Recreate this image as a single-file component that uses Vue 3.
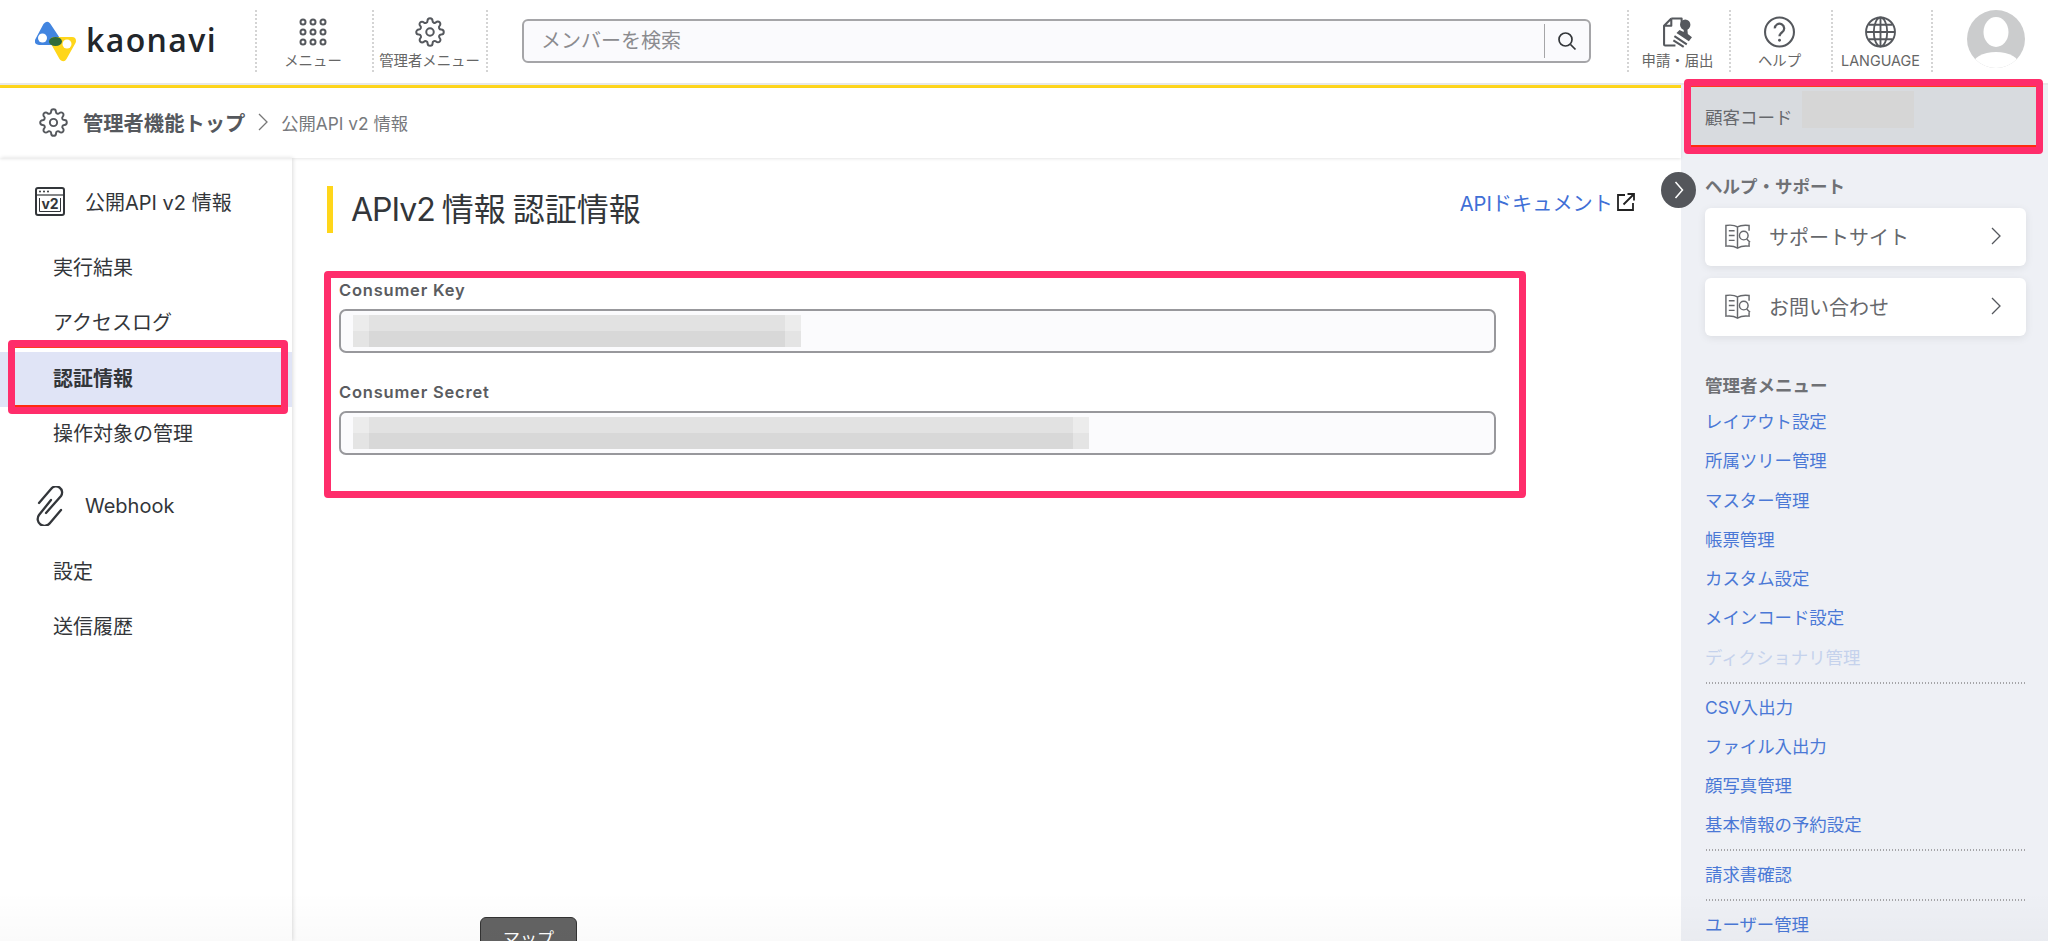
<template>
  <div class="page">
    <header class="topbar">
      <div class="brand">
        <svg class="logo" viewBox="0 0 42 42" width="42" height="42">
          <path d="M12 6 L4 21 L22 21 Z" fill="#4285e0" stroke="#4285e0" stroke-width="8" stroke-linejoin="round" />
          <path d="M19 21 L37 21 L28 37 Z" fill="#ffd61a" stroke="#ffd61a" stroke-width="8" stroke-linejoin="round" />
          <ellipse cx="20.5" cy="21.5" rx="6.5" ry="4.5" fill="#2f6b3a" />
          <circle cx="7.5" cy="18" r="4.5" fill="#fff" />
          <circle cx="32" cy="24" r="4.5" fill="#fff" />
        </svg>
        <span class="wordmark">kaonavi</span>
      </div>

      <div class="cell cell-first cell-left">
        <svg class="icon" viewBox="0 0 28 28" width="28" height="28" fill="none" stroke="#55585d" stroke-width="2">
          <g v-for="y in [4, 14, 24]" :key="y">
            <circle v-for="x in [4, 14, 24]" :key="x" :cx="x" :cy="y" r="2.5" />
          </g>
        </svg>
        <span class="cell-label">メニュー</span>
      </div>
      <div class="cell cell-left cell-right">
        <svg class="icon" viewBox="0 0 24 24" width="30" height="30" fill="none" stroke="#55585d" stroke-width="1.6">
          <circle cx="12" cy="12" r="3" />
          <path :d="gearPath" />
        </svg>
        <span class="cell-label">管理者メニュー</span>
      </div>

      <div class="search">
        <input class="search-input" type="text" placeholder="メンバーを検索" />
        <span class="search-btn">
          <svg viewBox="0 0 20 20" width="20" height="20" fill="none" stroke="#33363a" stroke-width="1.7">
            <circle cx="8.5" cy="8.5" r="6.5" />
            <path d="M13.5 13.5 L18.5 18.5" />
          </svg>
        </span>
      </div>

      <div class="cell wide cell-left">
        <svg class="icon" viewBox="0 0 30 30" width="31" height="30">
          <path d="M9 2 H19 V9 M9 2 L2 9 V27 a1 1 0 0 0 1 1 H13 M2 9 H9 V2" fill="none" stroke="#55585d" stroke-width="2" stroke-linejoin="round" />
          <circle cx="22.5" cy="8" r="5" fill="#55585d" />
          <path d="M21 12 L24.5 12 L25 17 L29 20 L26 24 L14 16 L17 13 L21 15 Z" fill="#55585d" />
          <path d="M12 19 L24 27 M11 23 L21 29.5" stroke="#55585d" stroke-width="2" fill="none" />
        </svg>
        <span class="cell-label">申請・届出</span>
      </div>
      <div class="cell wide cell-left">
        <svg class="icon" viewBox="0 0 30 30" width="31" height="31" fill="none" stroke="#55585d" stroke-width="2">
          <circle cx="15" cy="15" r="14" />
          <path d="M10.5 11.5 a4.5 4.5 0 1 1 7 3.7 c-1.7 1.1 -2.5 2 -2.5 3.8" stroke-width="2.2" />
          <circle cx="15" cy="23" r="1.4" fill="#55585d" stroke="none" />
        </svg>
        <span class="cell-label">ヘルプ</span>
      </div>
      <div class="cell wide cell-left cell-right">
        <svg class="icon" viewBox="0 0 30 30" width="31" height="31" fill="none" stroke="#55585d" stroke-width="1.8">
          <circle cx="15" cy="15" r="14" />
          <ellipse cx="15" cy="15" rx="6.5" ry="14" />
          <path d="M15 1 V29 M1 15 H29 M3.5 8 H26.5 M3.5 22 H26.5" />
        </svg>
        <span class="cell-label">LANGUAGE</span>
      </div>

      <div class="avatar">
        <svg viewBox="0 0 58 58" width="58" height="58">
          <defs>
            <clipPath id="avatar-clip"><circle cx="29" cy="29" r="29" /></clipPath>
          </defs>
          <circle cx="29" cy="29" r="29" fill="#cbcccd" />
          <g clip-path="url(#avatar-clip)" fill="#fff">
            <ellipse cx="29" cy="22" rx="12.5" ry="15" />
            <ellipse cx="29" cy="56" rx="24" ry="14" />
          </g>
        </svg>
      </div>
    </header>

    <div class="body">
      <div class="main">
        <div class="breadcrumb">
          <svg viewBox="0 0 24 24" width="29" height="29" fill="none" stroke="#55585d" stroke-width="1.6">
            <circle cx="12" cy="12" r="3" />
            <path :d="gearPath" />
          </svg>
          <span class="crumb-top">管理者機能トップ</span>
          <svg class="crumb-sep" viewBox="0 0 10 18" width="10" height="18" fill="none" stroke="#777" stroke-width="1.3">
            <path d="M1 1 L9 9 L1 17" />
          </svg>
          <span class="crumb-current">公開API v2 情報</span>
        </div>

        <div class="columns">
          <aside class="sidebar">
            <div class="side-title">
              <svg class="side-icon" viewBox="0 0 30 29" width="30" height="29">
                <rect x="1" y="1" width="28" height="27" rx="2" fill="none" stroke="#33363a" stroke-width="2" />
                <path d="M1 8 H29" stroke="#33363a" stroke-width="1.2" />
                <circle cx="5" cy="4.5" r="1" fill="#33363a" />
                <circle cx="9" cy="4.5" r="1" fill="#33363a" />
                <circle cx="13" cy="4.5" r="1" fill="#33363a" />
                <path d="M4.5 11 V24.500 H25.500 V11" fill="none" stroke="#33363a" stroke-width="1" />
                <text x="15" y="22" class="v2-text">v2</text>
              </svg>
              <span>公開API v2 情報</span>
            </div>
            <a
              v-for="item in apiItems"
              :key="item.label"
              class="side-item"
              :class="{ active: item.active }"
            >{{ item.label }}</a>

            <div class="side-title webhook">
              <svg class="side-icon" viewBox="10 5 30 40" width="30" height="40" fill="none" stroke="#33363a" stroke-width="2.300" stroke-linecap="round">
                <path d="M14 22 L26 8 a6 6 0 0 1 10 7 L21 32" />
                <path d="M36 29 L25 42 a6.500 6.500 0 0 1 -11 -8 L26 19" />
              </svg>
              <span>Webhook</span>
            </div>
            <a v-for="item in hookItems" :key="item" class="side-item">{{ item }}</a>
          </aside>

          <main class="content">
            <div class="content-head">
              <h1 class="heading"><span class="heading-api">APIv2</span> 情報 認証情報</h1>
              <a class="doc-link">
                APIドキュメント
                <svg viewBox="0 0 18 18" width="18" height="18" fill="none" stroke="#222" stroke-width="1.8">
                  <path d="M8 2 H1 V17 H16 V10" />
                  <path d="M6.500 11.500 L16.500 1.500 M10.500 1 H17 V7.500" />
                </svg>
              </a>
            </div>

            <section class="cred-box">
              <div v-for="field in fields" :key="field.label" class="field">
                <label class="field-label">{{ field.label }}</label>
                <div class="field-input">
                  <div class="mosaic" :style="{ width: field.width + 'px' }">
                    <i class="m1"></i><i class="m2"></i><i class="m1"></i>
                    <i class="m3"></i><i class="m4"></i><i class="m3"></i>
                  </div>
                </div>
              </div>
            </section>
          </main>
        </div>

        <div class="map-tab">マップ</div>
      </div>

      <aside class="panel">
        <button class="toggle" type="button">
          <svg viewBox="0 0 10 18" width="10" height="18" fill="none" stroke="#fff" stroke-width="1.5">
            <path d="M1.500 1 L8.500 9 L1.500 17" />
          </svg>
        </button>

        <div class="customer">
          <span>顧客コード</span>
          <i class="customer-mask"></i>
        </div>

        <h2 class="panel-title help-title">ヘルプ・サポート</h2>
        <a v-for="card in cards" :key="card" class="card">
          <svg viewBox="0 0 28 28" width="27" height="27" fill="none" stroke="#66686c" stroke-width="1.500">
            <path d="M14 4 C10 1.500 6 2 2 2.500 V24 C6 23.500 10 23.500 14 26 C18 23.500 22 23.500 26 24 V20" />
            <path d="M14 4 C16.500 2.500 20 2 26 2.500 V8 M14 4 V26" />
            <path d="M5 8 H11 M5 13 H11 M5 18 H11" />
            <circle cx="20.500" cy="13" r="4.500" />
            <path d="M23.500 16.500 L27 20" />
          </svg>
          <span class="card-text">{{ card }}</span>
          <svg class="card-arrow" viewBox="0 0 10 18" width="10" height="18" fill="none" stroke="#55585d" stroke-width="1.300">
            <path d="M1 1 L9 9 L1 17" />
          </svg>
        </a>

        <h2 class="panel-title admin-title">管理者メニュー</h2>
        <div v-for="(group, i) in linkGroups" :key="i" class="link-group" :class="{ divided: i > 0 }">
          <a
            v-for="link in group"
            :key="link"
            class="panel-link"
            :class="{ disabled: link === 'ディクショナリ管理' }"
          >{{ link }}</a>
        </div>
      </aside>
    </div>
  </div>
</template>

<script setup>
const gearPath = 'M19.4 15a1.65 1.65 0 0 0 .33 1.82l.06.06a2 2 0 0 1 0 2.83 2 2 0 0 1-2.83 0l-.06-.06a1.65 1.65 0 0 0-1.82-.33 1.65 1.65 0 0 0-1 1.51V21a2 2 0 0 1-2 2 2 2 0 0 1-2-2v-.09A1.65 1.65 0 0 0 9 19.4a1.65 1.65 0 0 0-1.82.33l-.06.06a2 2 0 0 1-2.83 0 2 2 0 0 1 0-2.83l.06-.06a1.65 1.65 0 0 0 .33-1.82 1.65 1.65 0 0 0-1.51-1H3a2 2 0 0 1-2-2 2 2 0 0 1 2-2h.09A1.65 1.65 0 0 0 4.6 9a1.65 1.65 0 0 0-.33-1.82l-.06-.06a2 2 0 0 1 0-2.83 2 2 0 0 1 2.83 0l.06.06a1.65 1.65 0 0 0 1.82.33H9a1.65 1.65 0 0 0 1-1.51V3a2 2 0 0 1 2-2 2 2 0 0 1 2 2v.09a1.65 1.65 0 0 0 1 1.51 1.65 1.65 0 0 0 1.82-.33l.06-.06a2 2 0 0 1 2.83 0 2 2 0 0 1 0 2.83l-.06.06a1.65 1.65 0 0 0-.33 1.82V9a1.65 1.65 0 0 0 1.51 1H21a2 2 0 0 1 2 2 2 2 0 0 1-2 2h-.09a1.65 1.65 0 0 0-1.51 1z'

const apiItems = [
  { label: '実行結果' },
  { label: 'アクセスログ' },
  { label: '認証情報', active: true },
  { label: '操作対象の管理' }
]
const hookItems = ['設定', '送信履歴']

const fields = [
  { label: 'Consumer Key', width: 448 },
  { label: 'Consumer Secret', width: 736 }
]

const cards = ['サポートサイト', 'お問い合わせ']

const linkGroups = [
  ['レイアウト設定', '所属ツリー管理', 'マスター管理', '帳票管理', 'カスタム設定', 'メインコード設定', 'ディクショナリ管理'],
  ['CSV入出力', 'ファイル入出力', '顔写真管理', '基本情報の予約設定'],
  ['請求書確認'],
  ['ユーザー管理']
]
</script>

<style>
html,
body {
  margin: 0;
  background: #fff;
}
</style>

<style scoped>
.page {
  position: relative;
  width: 2048px;
  height: 941px;
  overflow: hidden;
  display: flex;
  flex-direction: column;
  font-family: Inter, "Noto Sans CJK JP", sans-serif;
  color: #33363a;
}

/* faint fade along the bottom of the window */
.page::after {
  content: "";
  position: absolute;
  left: 0;
  right: 0;
  bottom: 0;
  height: 50px;
  background: linear-gradient(rgba(0, 0, 0, 0), rgba(0, 0, 0, 0.02));
  pointer-events: none;
  z-index: 5;
}

/* top bar */
.topbar {
  height: 83px;
  flex: none;
  display: flex;
  background: #fff;
  border-bottom: 2px solid #e8e8e8;
}

.brand {
  width: 220px;
  padding-left: 35px;
  padding-top: 20px;
  display: flex;
  align-items: flex-start;
  gap: 9px;
}

.logo {
  flex: none;
}

.wordmark {
  font-family: "Open Sans", sans-serif;
  font-size: 32px;
  font-weight: 600;
  line-height: 40px;
  letter-spacing: 1.4px;
  color: #22262b;
}

.cell {
  width: 116px;
  height: 62px;
  margin-top: 10px;
  display: flex;
  flex-direction: column;
  align-items: center;
  padding: 6px 1px 0 0;
  box-sizing: border-box;
  flex: none;
}

.cell-first {
  width: 117px;
  padding-right: 3px;
}

.cell.wide {
  width: 102px;
  padding-right: 3px;
}

.cell-left {
  border-left: 2px dotted #d4d4d4;
}

.cell-right {
  border-right: 2px dotted #d4d4d4;
}

.icon {
  height: 32px;
}

.cell-label {
  margin-top: 4px;
  font-size: 14.400px;
  line-height: 18px;
  color: #666;
  white-space: nowrap;
}

.search {
  flex: 1;
  height: 44px;
  margin: 19px 36px 0 34px;
  display: flex;
  align-items: center;
  box-sizing: border-box;
  background: #fafafd;
  border: 2px solid #a5a5a8;
  border-radius: 6px;
}

.search-input {
  flex: 1;
  height: 100%;
  padding: 0 17px;
  border: 0;
  outline: 0;
  background: transparent;
  font-family: Inter, "Noto Sans CJK JP", sans-serif;
  font-size: 20px;
}

.search-input::placeholder {
  color: #8b8b8f;
}

.search-btn {
  width: 44px;
  height: 34px;
  display: flex;
  align-items: center;
  justify-content: center;
  border-left: 1px solid #a5a5a8;
}

.avatar {
  width: 115px;
  box-sizing: border-box;
  flex: none;
  padding: 10px 0 0 34px;
}

/* page body */
.body {
  flex: 1;
  display: flex;
  min-height: 0;
}

.main {
  position: relative;
  flex: 1;
  display: flex;
  flex-direction: column;
  border-top: 3px solid #ffd61a;
  min-width: 0;
}

.breadcrumb {
  height: 70px;
  flex: none;
  display: flex;
  align-items: center;
  padding: 0 0 2px 39px;
  box-sizing: border-box;
  box-shadow: 0 1px 3px rgba(0, 0, 0, 0.1);
  position: relative;
  z-index: 1;
}

.crumb-top {
  margin-left: 15px;
  font-size: 20.300px;
  font-weight: 700;
  color: #55585d;
}

.crumb-sep {
  margin: 0 13px;
}

.crumb-current {
  font-size: 17.300px;
  color: #77797d;
}

.columns {
  flex: 1;
  display: flex;
  min-height: 0;
}

.sidebar {
  width: 292px;
  flex: none;
  padding-top: 21px;
  box-sizing: border-box;
  box-shadow: 1px 0 4px rgba(0, 0, 0, 0.14);
}

.side-title {
  height: 44px;
  padding-left: 35px;
  display: flex;
  align-items: center;
  font-size: 20px;
  color: #33363a;
  margin-bottom: 18px;
}

.side-title.webhook {
  margin-top: 22px;
  margin-bottom: 17px;
}

.side-icon {
  flex: none;
  margin-right: 20px;
}

.v2-text {
  font-family: Inter, sans-serif;
  font-size: 14px;
  font-weight: 700;
  fill: #33363a;
  text-anchor: middle;
}

.side-item {
  position: relative;
  display: block;
  height: 55.300px;
  line-height: 55.300px;
  padding-left: 53px;
  font-size: 20px;
  color: #33363a;
}

.side-item.active {
  background: #e0e4f6;
  font-weight: 700;
}

/* annotation frame drawn over the selected row */
.side-item.active::after {
  content: "";
  position: absolute;
  left: 8px;
  top: -12px;
  width: 280px;
  height: 74px;
  box-sizing: border-box;
  border: 7px solid #ff2d6b;
  border-radius: 4px;
  box-shadow: inset 0 1px 0 #ff3b1f, inset 0 -2px 0 #ff2a10;
}

.content {
  flex: 1;
  padding: 28px 46px 0 35px;
  min-width: 0;
}

.content-head {
  display: flex;
  justify-content: space-between;
  align-items: flex-start;
}

.heading {
  margin: 0;
  height: 47px;
  padding-left: 18px;
  border-left: 6px solid #ffd61a;
  font-size: 32px;
  font-weight: 400;
  line-height: 47px;
  word-spacing: -2px;
  color: #33363a;
}

.heading-api {
  letter-spacing: -1px;
}

.doc-link {
  display: flex;
  align-items: center;
  gap: 4px;
  height: 32px;
  font-size: 20.200px;
  color: #3f6fd6;
}

.cred-box {
  margin: 38px 0 0 -3px;
  width: 1202px;
  height: 227px;
  box-sizing: border-box;
  border: 7px solid #ff2d6b;
  border-radius: 4px;
  padding-left: 8px;
}

.field {
  margin-bottom: 27px;
}

.field-label {
  display: block;
  height: 24px;
  margin-bottom: 7px;
  font-size: 16.500px;
  font-weight: 600;
  line-height: 24px;
  letter-spacing: 0.800px;
  color: #5a5c60;
}

.field-input {
  width: 1157px;
  height: 44px;
  box-sizing: border-box;
  padding-left: 12px;
  display: flex;
  align-items: center;
  background: #fbfbfd;
  border: 2px solid #98989c;
  border-radius: 7px;
}

.mosaic {
  height: 32px;
  display: grid;
  grid-template-columns: 16px 1fr 16px;
  grid-template-rows: 16px 16px;
}

.m1 { background: #ececec; }
.m2 { background: #e2e2e2; }
.m3 { background: #e4e4e4; }
.m4 { background: #d8d8d8; }

.map-tab {
  position: absolute;
  left: 480px;
  top: 829px;
  width: 97px;
  height: 40px;
  box-sizing: border-box;
  padding-top: 7px;
  text-align: center;
  font-size: 17px;
  color: #fff;
  background: #636363;
  border: 1px solid #333;
  border-radius: 6px 6px 0 0;
  z-index: 2;
}

/* right panel */
.panel {
  position: relative;
  width: 367px;
  flex: none;
  padding: 2px 22px 0 24px;
  box-sizing: border-box;
  background: #eef0f5;
}

.toggle {
  position: absolute;
  left: -20px;
  top: 87px;
  width: 35px;
  height: 36px;
  padding: 0;
  display: flex;
  align-items: center;
  justify-content: center;
  background: #54565b;
  border: 0;
  border-radius: 50%;
  z-index: 3;
}

.customer {
  position: relative;
  height: 59px;
  margin: 0 -10px 0 -14px;
  padding-left: 14px;
  display: flex;
  align-items: center;
  background: #d8dbdf;
  font-size: 17.500px;
  color: #66686c;
}

/* annotation frame around the customer code */
.customer::after {
  content: "";
  position: absolute;
  left: -7px;
  right: -7px;
  top: -8px;
  bottom: -8px;
  border: 7px solid #ff2d6b;
  border-radius: 4px;
  box-shadow: inset 0 1px 0 #ff3b1f, inset 0 -2px 0 #ff2a10;
}

.customer-mask {
  width: 112px;
  height: 37px;
  margin: 0 0 14px 9px;
  background: #d6d6d6;
}

.panel-title {
  margin: 0;
  font-size: 17.500px;
  font-weight: 700;
  line-height: 24px;
  color: #6f7175;
}

.help-title {
  margin-top: 29px;
  margin-bottom: 9px;
}

.admin-title {
  margin-top: 38px;
  margin-bottom: 4px;
}

.card {
  height: 58px;
  margin-bottom: 12px;
  padding: 0 19px 2px;
  box-sizing: border-box;
  display: flex;
  align-items: center;
  background: #fff;
  border-radius: 6px;
  box-shadow: 0 2px 8px rgba(0, 0, 0, 0.08);
}

.card-text {
  flex: 1;
  margin-left: 18px;
  font-size: 20px;
  color: #66686c;
}

.card-arrow {
  margin-right: 6px;
}

.link-group.divided {
  margin-top: 4.500px;
  padding-top: 6px;
  background-image: radial-gradient(circle, #a5a5a8 0.6px, transparent 0.8px);
  background-size: 3px 2px;
  background-repeat: repeat-x;
  background-position: 0 0;
}

.panel-link {
  display: block;
  height: 39.300px;
  line-height: 39.300px;
  font-size: 17.400px;
  color: #4a78d6;
  white-space: nowrap;
}

.panel-link.disabled {
  color: #c5d2ec;
}
</style>
